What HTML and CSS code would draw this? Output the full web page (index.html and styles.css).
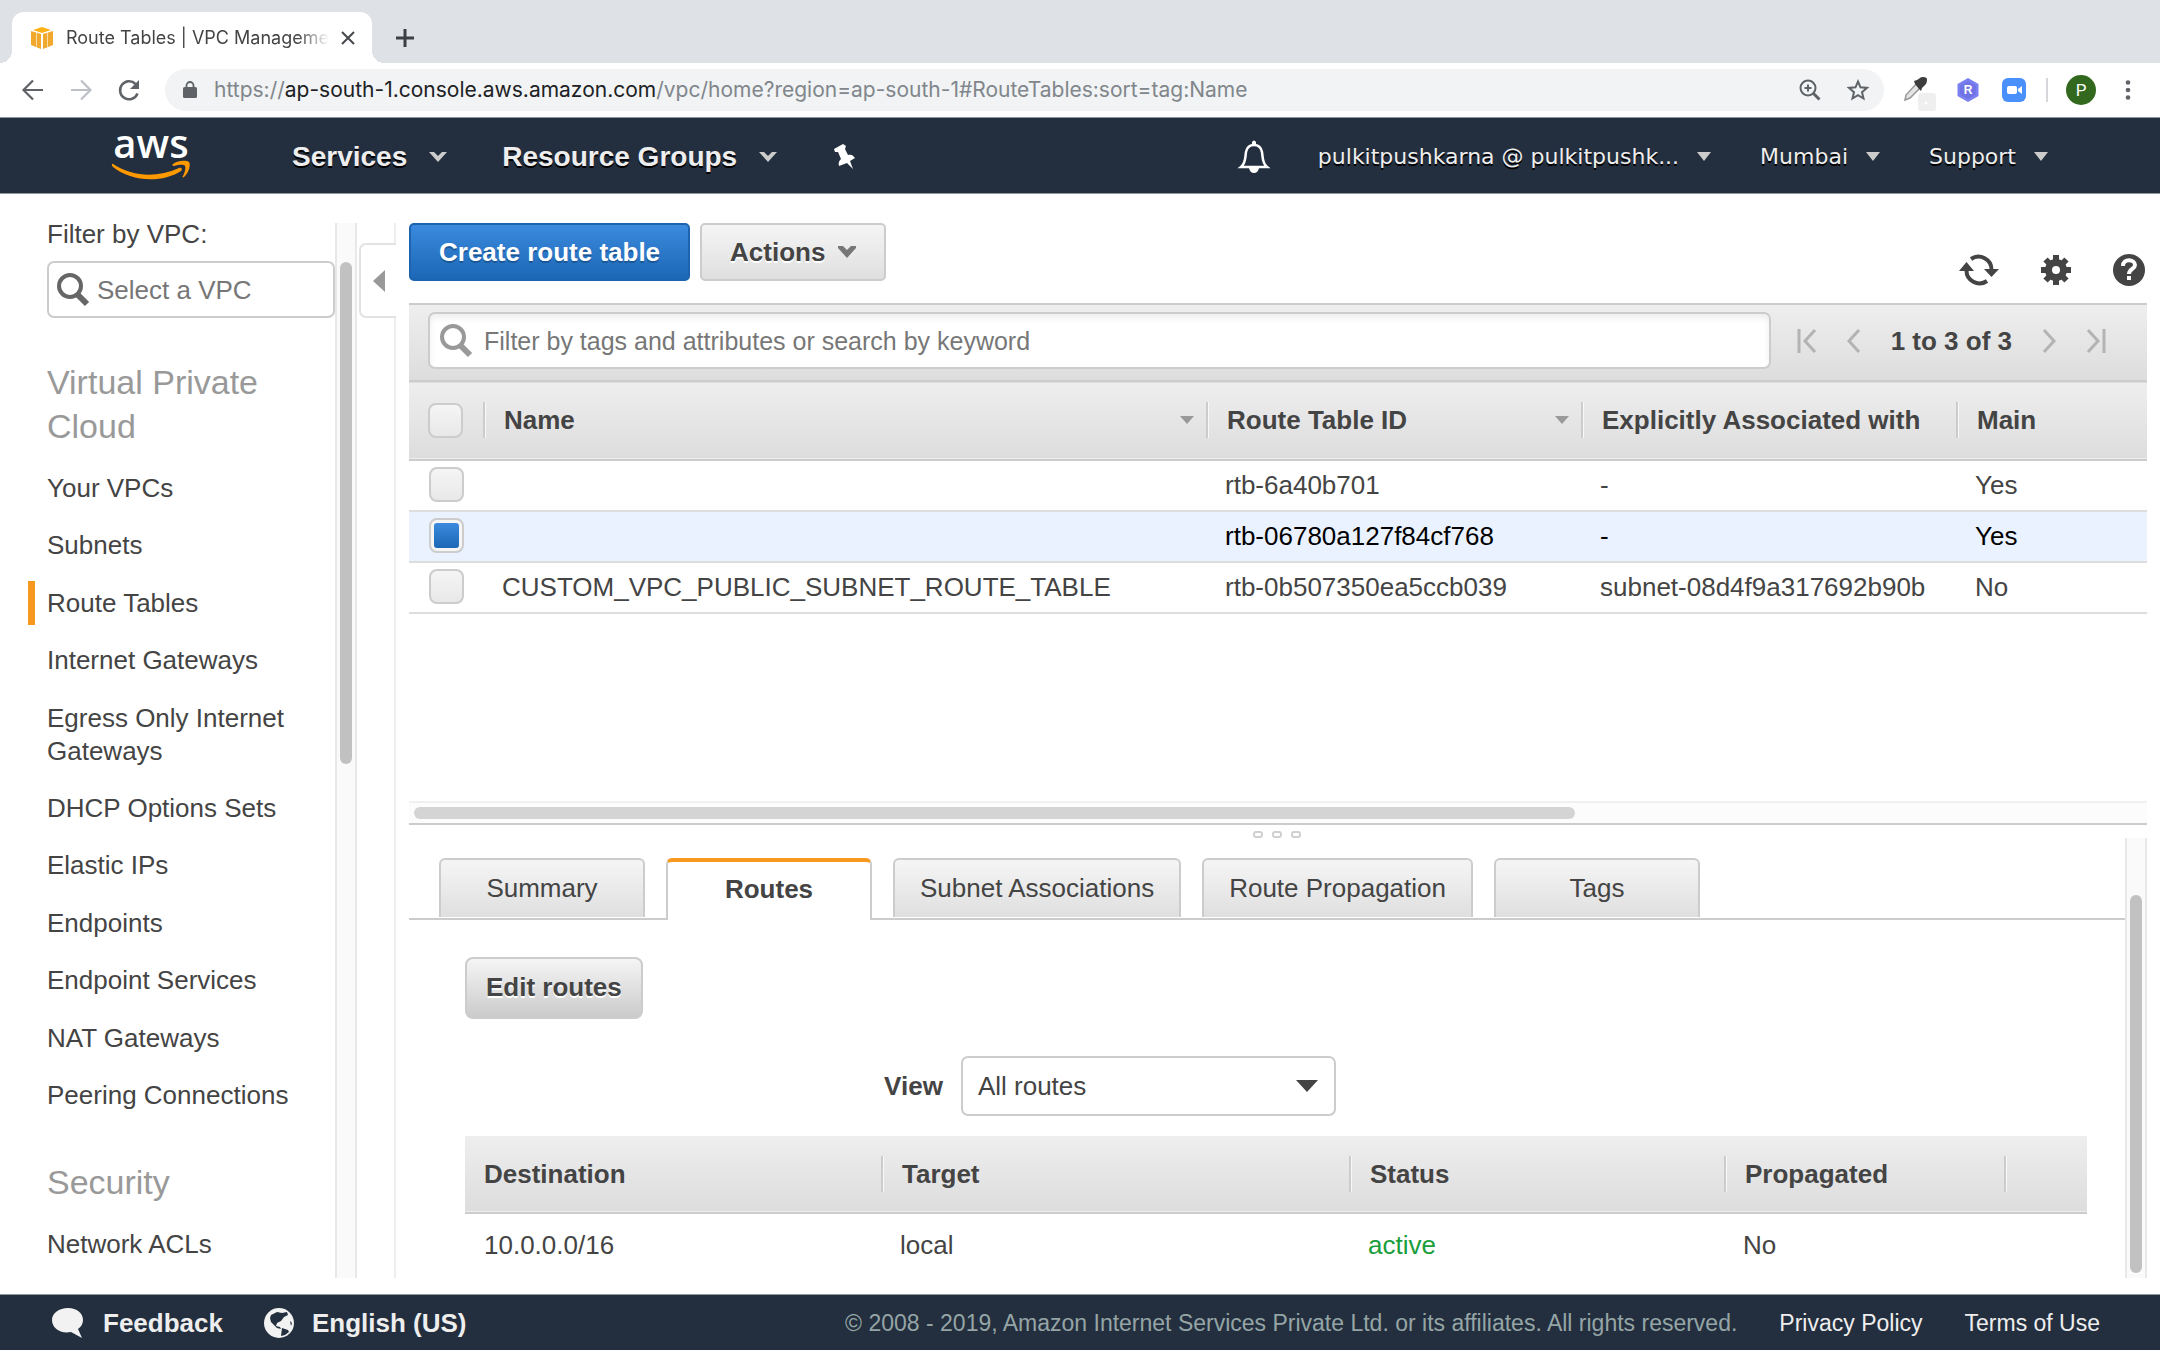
FILE: index.html
```
<!DOCTYPE html>
<html lang="en">
<head>
    <meta charset="UTF-8">
    <meta name="viewport" content="width=device-width, initial-scale=1.0">
    <title>Route Tables | VPC Management Console</title>
    <link rel="stylesheet" href="styles.css">
</head>
<body>

<!-- Browser window -->
<div class="tab-strip">
    <div class="browser-tab">
        <svg class="favicon" width="22" height="22" viewBox="0 0 22 22">
            <path fill="#f0a92c" d="M0 4l10 3v15L0 18zM22 4l-10 3v15l10-4z"/>
            <path fill="#fbb117" d="M11 0l9 3-9 3-9-3z"/>
            <path fill="#fff" opacity=".6" d="M5 5.500l1 .3v14L5 19.500zM17 5.500l-1 .3v14l1-.3z"/>
        </svg>
        <span class="tab-title">Route Tables | VPC Management</span>
        <button class="chrome-button" aria-label="Close tab">
            <svg width="14" height="14" viewBox="0 0 14 14" fill="none" stroke="#45494d" stroke-width="2"><path d="M1 1l12 12M13 1L1 13"/></svg>
        </button>
    </div>
    <button class="chrome-button new-tab" aria-label="New tab">
        <svg width="20" height="20" viewBox="0 0 20 20" fill="none" stroke="#3c4043" stroke-width="3"><path d="M10 1v18M1 10h18"/></svg>
    </button>
</div>
<div class="browser-bar">
    <button class="chrome-button nav-button" aria-label="Back">
        <svg width="24" height="24" viewBox="0 0 24 24" fill="none" stroke="#5f6368" stroke-width="2.200"><path d="M22 12H3M12 2.500L2.500 12l9.500 9.500"/></svg>
    </button>
    <button class="chrome-button nav-button" aria-label="Forward">
        <svg width="24" height="24" viewBox="0 0 24 24" fill="none" stroke="#bdc1c6" stroke-width="2.200"><path d="M2 12h19M12 2.500l9.500 9.500-9.500 9.500"/></svg>
    </button>
    <button class="chrome-button nav-button" aria-label="Reload">
        <svg width="24" height="24" viewBox="0 0 24 24" fill="none" stroke="#5f6368" stroke-width="2.500"><path d="M20.500 15.500A9 9 0 1 1 18.500 6"/><path fill="#5f6368" stroke="none" d="M22 2v9h-9z"/></svg>
    </button>
    <div class="address-bar">
        <svg width="14" height="18" viewBox="0 0 14 18"><rect x="0" y="6" width="14" height="11" rx="1.500" fill="#5f6368"/><path d="M3.500 7V4.500a3.500 3.500 0 0 1 7 0V7" fill="none" stroke="#5f6368" stroke-width="1.800"/></svg>
        <span class="url">https://<span class="host">ap-south-1.console.aws.amazon.com</span>/vpc/home?region=ap-south-1#RouteTables:sort=tag:Name</span>
        <button class="chrome-button" aria-label="Zoom">
            <svg width="28" height="28" viewBox="0 0 28 28" fill="none" stroke="#5f6368" stroke-width="2"><circle cx="12" cy="12" r="7.500"/><path d="M12 8.500v7M8.500 12h7"/><path stroke-width="3" d="M17.500 17.500l6 6"/></svg>
        </button>
        <button class="chrome-button" aria-label="Bookmark">
            <svg width="28" height="28" viewBox="0 0 28 28" fill="none" stroke="#5f6368" stroke-width="2"><path d="M14 5.500l2.500 5.800 6.500.6-5 4.300 1.500 6.300-5.500-3.300-5.500 3.300L10 16.200l-5-4.300 6.500-.6z"/></svg>
        </button>
    </div>
    <svg width="34" height="42" viewBox="0 0 34 42">
        <rect x="16" y="24" width="18" height="18" rx="3" fill="#efefef"/><circle cx="24" cy="34" r="1.500" fill="#fff"/>
        <path d="M3 31l1-5L15 14l4 4L8 29z" fill="#e4e4e4" stroke="#999" stroke-width="1.500"/>
        <path d="M12 12l3-1 3-2c2-2 7-1 7 1s0 5-3 7l-2 2-1 3-2-2-4-5z" fill="#3d3d3d"/>
    </svg>
    <svg width="28" height="28" viewBox="0 0 28 28"><path d="M14 2l10.500 6v12L14 26 3.500 20V8z" fill="#7b80f0"/><path d="M14 5l8 4.500v9L14 23l-8-4.500v-9z" fill="#7074e6"/><text class="hex-letter" x="14" y="18" text-anchor="middle">R</text></svg>
    <svg width="28" height="28" viewBox="0 0 28 28"><rect x="2" y="2" width="24" height="24" rx="6" fill="#4a90fb"/><rect x="7" y="10" width="10" height="8" rx="2" fill="#fff"/><path d="M18 13l4-3v8l-4-3z" fill="#fff"/></svg>
    <span class="bar-divider"></span>
    <span class="avatar">P</span>
    <button class="chrome-button" aria-label="Menu">
        <svg width="28" height="28" viewBox="0 0 28 28" fill="#5f6368"><circle cx="14" cy="6.500" r="2.300"/><circle cx="14" cy="14" r="2.300"/><circle cx="14" cy="21.500" r="2.300"/></svg>
    </button>
</div>

<!-- AWS navigation -->
<header class="aws-nav">
    <a class="logo" href="#" aria-label="AWS">
        <svg width="78" height="48" viewBox="0 0 78 48">
            <text class="logo-text" x="38" y="25" text-anchor="middle">aws</text>
            <path fill="#f90" d="M0 31c20 13 44 14 66 4 2-1 4 1 2 3-20 13-51 10-68-4-2-2-1-4 0-3z"/>
            <path fill="#f90" d="M60 31c5-4 14-4 16-2s0 11-5 15c-1 1-2 0-1-1 2-4 3-8 2-10s-7-1-11 0c-2 0-2-1-1-2z"/>
        </svg>
    </a>
    <button class="nav-item nav-main">Services
        <svg width="18" height="12" viewBox="0 0 18 12"><path fill="#ccc" d="M0 1h5l4 4 4-4h5l-9 10z"/></svg>
    </button>
    <button class="nav-item nav-main">Resource Groups
        <svg width="18" height="12" viewBox="0 0 18 12"><path fill="#ccc" d="M0 1h5l4 4 4-4h5l-9 10z"/></svg>
    </button>
    <button class="nav-item" aria-label="Pin shortcuts">
        <svg width="24" height="26" viewBox="0 0 24 26"><path fill="#fff" d="M2 5l9-5 3 2-1 3 3 6c3-1 5 0 7 3l-5 3 3 8-6-6-8 3c-1-3 0-5 2-7L6 8H3z"/></svg>
    </button>
    <div class="nav-right">
        <button class="nav-item" aria-label="Notifications">
            <svg width="30" height="34" viewBox="0 0 30 34"><path fill="none" stroke="#fff" stroke-width="2.500" d="M2 27c5-4 4-9 5-15 1-5 4-7 8-7s7 2 8 7c1 6 0 11 5 15z"/><path fill="#fff" d="M13 2q2-3 4 0v3h-4zM10 28h10q-1 5-5 5t-5-5z"/></svg>
        </button>
        <button class="nav-item nav-small">pulkitpushkarna @ pulkitpushk...
            <svg width="14" height="9" viewBox="0 0 14 9"><path fill="#ccc" d="M0 0h14L7 9z"/></svg>
        </button>
        <button class="nav-item nav-small">Mumbai
            <svg width="14" height="9" viewBox="0 0 14 9"><path fill="#ccc" d="M0 0h14L7 9z"/></svg>
        </button>
        <button class="nav-item nav-small">Support
            <svg width="14" height="9" viewBox="0 0 14 9"><path fill="#ccc" d="M0 0h14L7 9z"/></svg>
        </button>
    </div>
</header>

<div class="console">
    <aside class="sidebar">
        <label class="filter-label" for="vpcFilter">Filter by VPC:</label>
        <div class="search-box vpc-filter">
            <svg width="34" height="34" viewBox="0 0 34 34" fill="none" stroke="#666"><circle cx="14" cy="13" r="11" stroke-width="4"/><path d="M22 22l9 9" stroke-width="6"/></svg>
            <input type="text" id="vpcFilter" placeholder="Select a VPC">
        </div>
        <h2>Virtual Private Cloud</h2>
        <ul class="side-list side-list-main">
            <li><a href="#">Your VPCs</a></li>
            <li><a href="#">Subnets</a></li>
            <li class="current"><a href="#">Route Tables</a></li>
            <li><a href="#">Internet Gateways</a></li>
            <li><a href="#">Egress Only Internet Gateways</a></li>
            <li><a href="#">DHCP Options Sets</a></li>
            <li><a href="#">Elastic IPs</a></li>
            <li><a href="#">Endpoints</a></li>
            <li><a href="#">Endpoint Services</a></li>
            <li><a href="#">NAT Gateways</a></li>
            <li><a href="#">Peering Connections</a></li>
        </ul>
        <h2>Security</h2>
        <ul class="side-list">
            <li><a href="#">Network ACLs</a></li>
        </ul>
    </aside>
    <div class="side-scroll"><div class="side-thumb"></div></div>
    <div class="side-edge">
        <button class="collapse" aria-label="Collapse sidebar">
            <svg width="12" height="22" viewBox="0 0 12 22"><path fill="#999" d="M12 0v22L0 11z"/></svg>
        </button>
    </div>

    <main class="content">
        <div class="action-bar">
            <button class="btn btn-primary">Create route table</button>
            <button class="btn">Actions
                <svg width="18" height="12" viewBox="0 0 18 12"><path fill="#777" d="M0 0h5l4 4 4-4h5v2l-9 10L0 2z"/></svg>
            </button>
            <div class="tools">
                <button class="tool" aria-label="Refresh">
                    <svg width="40" height="34" viewBox="0 0 40 34" fill="none" stroke="#444" stroke-width="4"><path d="M12 6A13 13 0 0 1 32.500 17M28 28A13 13 0 0 1 7.500 17"/><path fill="#444" stroke="none" d="M25 16h15l-7.500 8zM0 18h15L7.500 9z"/></svg>
                </button>
                <button class="tool" aria-label="Preferences">
                    <svg width="30" height="30" viewBox="0 0 30 30"><circle cx="15" cy="15" r="7.500" fill="none" stroke="#444" stroke-width="7"/><path stroke="#444" stroke-width="6" d="M15 0v6M15 24v6M0 15h6M24 15h6M4.500 4.500l4 4M21.500 21.500l4 4M25.500 4.500l-4 4M8.500 21.500l-4 4"/></svg>
                </button>
                <button class="tool" aria-label="Help">
                    <svg width="32" height="32" viewBox="0 0 32 32"><circle cx="16" cy="16" r="16" fill="#444"/><path fill="none" stroke="#fff" stroke-width="4" d="M10 12c0-8 12-7 12-1 0 4-6 4-6 9"/><path fill="#fff" d="M14 22h4v4h-4z"/></svg>
                </button>
            </div>
        </div>

        <div class="grid-filter">
            <div class="search-box grid-search">
                <svg width="34" height="34" viewBox="0 0 34 34" fill="none" stroke="#999"><circle cx="14" cy="13" r="11" stroke-width="4"/><path d="M22 22l9 9" stroke-width="6"/></svg>
                <input type="text" placeholder="Filter by tags and attributes or search by keyword" aria-label="Filter route tables">
            </div>
            <div class="pager">
                <button aria-label="First page"><svg width="20" height="24" viewBox="0 0 20 24" fill="none" stroke="#b3b3b3" stroke-width="3"><path d="M2 0v24M18 1L8 12l10 11"/></svg></button>
                <button aria-label="Previous page"><svg width="14" height="24" viewBox="0 0 14 24" fill="none" stroke="#b3b3b3" stroke-width="3"><path d="M12 1L2 12l10 11"/></svg></button>
                <span>1 to 3 of 3</span>
                <button aria-label="Next page"><svg width="14" height="24" viewBox="0 0 14 24" fill="none" stroke="#b3b3b3" stroke-width="3"><path d="M2 1l10 11L2 23"/></svg></button>
                <button aria-label="Last page"><svg width="20" height="24" viewBox="0 0 20 24" fill="none" stroke="#b3b3b3" stroke-width="3"><path d="M18 0v24M2 1l10 11L2 23"/></svg></button>
            </div>
        </div>

        <table class="data-table route-tables">
            <colgroup>
                <col class="col-check"><col><col class="col-id"><col class="col-id"><col class="col-main">
            </colgroup>
            <thead>
                <tr>
                    <th class="check"><input type="checkbox" aria-label="Select all"></th>
                    <th><div class="th">Name <svg width="14" height="8" viewBox="0 0 14 8"><path fill="#999" d="M0 0h14L7 8z"/></svg></div></th>
                    <th><div class="th">Route Table ID <svg width="14" height="8" viewBox="0 0 14 8"><path fill="#999" d="M0 0h14L7 8z"/></svg></div></th>
                    <th><div class="th">Explicitly Associated with</div></th>
                    <th><div class="th">Main</div></th>
                </tr>
            </thead>
            <tbody>
                <tr>
                    <td class="check"><input type="checkbox" aria-label="Select rtb-6a40b701"></td>
                    <td></td>
                    <td>rtb-6a40b701</td>
                    <td>-</td>
                    <td>Yes</td>
                </tr>
                <tr class="selected">
                    <td class="check"><input type="checkbox" aria-label="Select rtb-06780a127f84cf768" checked></td>
                    <td></td>
                    <td>rtb-06780a127f84cf768</td>
                    <td>-</td>
                    <td>Yes</td>
                </tr>
                <tr>
                    <td class="check"><input type="checkbox" aria-label="Select rtb-0b507350ea5ccb039"></td>
                    <td>CUSTOM_VPC_PUBLIC_SUBNET_ROUTE_TABLE</td>
                    <td>rtb-0b507350ea5ccb039</td>
                    <td>subnet-08d4f9a317692b90b</td>
                    <td>No</td>
                </tr>
            </tbody>
        </table>

        <div class="grid-scroll"><div class="grid-thumb"></div></div>
        <div class="splitter"><i></i><i></i><i></i></div>

        <section class="details">
            <div class="details-body">
                <div class="tabs" role="tablist">
                    <button class="tab" role="tab">Summary</button>
                    <button class="tab active" role="tab" aria-selected="true">Routes</button>
                    <button class="tab" role="tab">Subnet Associations</button>
                    <button class="tab" role="tab">Route Propagation</button>
                    <button class="tab" role="tab">Tags</button>
                </div>
                <div class="panel">
                    <button class="btn btn-edit">Edit routes</button>
                    <div class="view-row">
                        <label for="view">View</label>
                        <div class="select-box">
                            <select id="view">
                                <option>All routes</option>
                                <option>Propagated</option>
                            </select>
                            <svg width="22" height="12" viewBox="0 0 22 12"><path fill="#444" d="M0 0h22L11 12z"/></svg>
                        </div>
                    </div>
                    <table class="data-table routes">
                        <colgroup>
                            <col class="col-destination"><col class="col-target"><col class="col-status"><col class="col-propagated"><col>
                        </colgroup>
                        <thead>
                            <tr>
                                <th><div class="th">Destination</div></th>
                                <th><div class="th">Target</div></th>
                                <th><div class="th">Status</div></th>
                                <th><div class="th">Propagated</div></th>
                                <th><div class="th"></div></th>
                            </tr>
                        </thead>
                        <tbody>
                            <tr>
                                <td>10.0.0.0/16</td>
                                <td>local</td>
                                <td class="status-active">active</td>
                                <td>No</td>
                                <td></td>
                            </tr>
                        </tbody>
                    </table>
                </div>
            </div>
            <div class="details-scroll"><div class="details-thumb"></div></div>
        </section>
    </main>
</div>

<footer class="aws-footer">
    <a class="footer-main" href="#">
        <svg width="34" height="32" viewBox="0 0 34 32"><path fill="#f2f2f2" d="M17 1c9 0 15 5 15 12 0 4-2 7-5 9l4 9-11-6C9 27 1 21 1 13 1 6 8 1 17 1z"/></svg>
        Feedback
    </a>
    <a class="footer-main" href="#">
        <svg width="30" height="30" viewBox="0 0 30 30"><circle cx="15" cy="15" r="15" fill="#f2f2f2"/><path fill="#232f3e" d="M7 7l6-3 5 1 5-1 1 3-4 2-3 4-4 2-1 3 4 1 1 2-4-1-6-6-1-4zM18 20l6 2 1 2-4 3-4 1zM26 13l2 2-1 3z"/></svg>
        English (US)
    </a>
    <div class="legal">
        <span>© 2008 - 2019, Amazon Internet Services Private Ltd. or its affiliates. All rights reserved.</span>
        <a href="#">Privacy Policy</a>
        <a href="#">Terms of Use</a>
    </div>
</footer>

</body>
</html>
```
FILE: styles.css
```
* {
    box-sizing: border-box;
}
body {
    margin: 0;
    height: 100vh;
    display: flex;
    flex-direction: column;
    font-family: "Liberation Sans", Arial, sans-serif;
    font-size: 26px;
    line-height: 32px;
    color: #444;
    background-color: #fff;
}
button, input, select {
    font: inherit;
    color: inherit;
}
button {
    padding: 0;
    border: none;
    background: none;
    cursor: pointer;
}
a {
    color: inherit;
    text-decoration: none;
}
svg {
    display: block;
    flex: none;
    overflow: visible;
}

/* Browser window */
.tab-strip {
    display: flex;
    align-items: flex-end;
    height: 63px;
    padding-left: 12px;
    background-color: #dee1e6;
}
.browser-tab {
    position: relative;
    display: flex;
    align-items: center;
    width: 360px;
    height: 51px;
    padding: 0 17px 0 19px;
    background-color: #fff;
    border-radius: 12px 12px 0 0;
}
/* Curved feet on both sides of the tab */
.browser-tab::before, .browser-tab::after {
    content: "";
    position: absolute;
    bottom: 0;
    width: 12px;
    height: 12px;
}
.browser-tab::before {
    left: -12px;
    background: radial-gradient(circle at 0 0, transparent 12px, #fff 12px);
}
.browser-tab::after {
    right: -12px;
    background: radial-gradient(circle at 100% 0, transparent 12px, #fff 12px);
}
.tab-title {
    flex: 1;
    margin: 0 12px 0 13px;
    font-family: Inter, sans-serif;
    font-size: 18px;
    white-space: nowrap;
    overflow: hidden;
    -webkit-mask-image: linear-gradient(to right, #000 88%, transparent);
    mask-image: linear-gradient(to right, #000 88%, transparent);
}
.new-tab {
    height: 51px;
    padding: 0 23px;
}
.browser-bar {
    display: flex;
    align-items: center;
    gap: 18px;
    height: 54px;
    padding: 0 18px 0 21px;
}
.nav-button {
    margin-right: 6px;
}
.address-bar {
    flex: 1;
    display: flex;
    align-items: center;
    gap: 17px;
    height: 42px;
    padding: 0 12px 0 18px;
    border-radius: 21px;
    background-color: #f1f3f4;
}
.address-bar .chrome-button + .chrome-button {
    margin-left: 3px;
}
.url {
    flex: 1;
    font-family: Inter, sans-serif;
    font-size: 21px;
    color: #80868b;
    white-space: nowrap;
}
.host {
    color: #202124;
}
.hex-letter {
    font-size: 12px;
    font-weight: bold;
    fill: #fff;
}
.bar-divider {
    width: 2px;
    height: 24px;
    background-color: #d5d7da;
}
.avatar {
    width: 30px;
    height: 30px;
    border-radius: 50%;
    background-color: #33691e;
    color: #fff;
    font-family: Roboto, sans-serif;
    font-size: 17px;
    line-height: 30px;
    text-align: center;
}

/* AWS navigation */
.aws-nav {
    display: flex;
    align-items: center;
    height: 77px;
    padding: 2px 112px 0 113px;
    background-color: #232f3e;
    border-top: 1px solid #8f969e;
    border-bottom: 1px solid #8f969e;
    color: #eee;
}
.logo {
    margin-right: 101px;
}
.logo-text {
    font-family: "Open Sans", sans-serif;
    font-size: 40px;
    font-weight: 600;
    fill: #fff;
}
.nav-item {
    display: flex;
    align-items: center;
    white-space: nowrap;
    text-shadow: 0 2px 0 #000;
}
.nav-main {
    gap: 22px;
    margin-right: 55px;
    font-size: 28px;
    font-weight: bold;
}
.nav-right {
    display: flex;
    align-items: center;
    gap: 49px;
    margin-left: auto;
}
.nav-small {
    gap: 18px;
    font-family: "DejaVu Sans", sans-serif;
    font-size: 22px;
}

/* Page layout */
.console {
    flex: 1;
    display: flex;
    min-height: 0;
    padding: 29px 13px 16px 0;
}
.sidebar {
    display: flex;
    flex-direction: column;
    width: 335px;
    padding-left: 47px;
}
.filter-label {
    line-height: 22px;
}
.search-box {
    display: flex;
    align-items: center;
    height: 57px;
    border: 2px solid #ccc;
    border-radius: 7px;
    background-color: #fff;
}
.search-box input {
    flex: 1;
    min-width: 0;
    padding: 0;
    border: none;
    outline: none;
    background: none;
}
.search-box input::placeholder {
    color: #777;
    opacity: 1;
}
.vpc-filter {
    gap: 7px;
    margin-top: 16px;
    padding: 0 7px;
}
.sidebar h2 {
    margin: 42px 48px 24px 0;
    font-size: 34px;
    font-weight: normal;
    line-height: 44px;
    color: #999;
}
.side-list {
    margin: 0;
    padding: 0;
    list-style-type: none;
    line-height: 33px;
}
.side-list-main {
    flex: 1;
    display: flex;
    flex-direction: column;
    justify-content: space-between;
}
.side-list li {
    padding-right: 40px;
}
.side-list + h2 {
    margin-top: 48px;
}
.side-list:last-child {
    margin-bottom: 17px;
}
.current {
    position: relative;
}
.current::before {
    content: "";
    position: absolute;
    left: -19px;
    top: -6px;
    width: 7px;
    height: 44px;
    background-color: #f7981f;
}
.side-scroll {
    width: 22px;
    padding: 39px 3px 0;
    border-left: 2px solid #e8e8e8;
    border-right: 2px solid #e8e8e8;
    background-color: #fafafa;
}
.side-thumb {
    width: 12px;
    height: 502px;
    border-radius: 6px;
    background-color: #c1c1c1;
}
.side-edge {
    width: 39px;
    padding: 20px 0 0 2px;
    border-right: 2px solid #eee;
}
.collapse {
    display: flex;
    align-items: center;
    width: 37px;
    height: 75px;
    padding-left: 12px;
    border: 2px solid #e2e2e2;
    border-right: none;
    border-radius: 7px 0 0 7px;
    background-color: #fff;
}
.content {
    flex: 1;
    display: flex;
    flex-direction: column;
    min-width: 0;
    margin-left: 13px;
}

/* Buttons */
.action-bar {
    display: flex;
    align-items: flex-start;
    gap: 10px;
    height: 80px;
}
.btn {
    display: flex;
    align-items: center;
    gap: 13px;
    height: 58px;
    padding: 0 28px;
    border: 2px solid #ccc;
    border-radius: 5px;
    background: linear-gradient(#f5f5f5, #dfdfdf);
    font-weight: bold;
    text-shadow: 0 2px 0 #fff;
}
.btn-primary {
    border-color: #1d64b0;
    background: linear-gradient(#3b8ade, #1c67b5);
    color: #fff;
    text-shadow: 0 2px 0 #1a5796;
}
.btn-edit {
    height: 62px;
    padding: 0 19px 2px;
    border-radius: 8px;
    background: linear-gradient(#f5f5f5, #cbcbcb);
}
.tools {
    display: flex;
    align-items: center;
    gap: 42px;
    margin: 30px 2px 0 auto;
}

/* Route table grid */
.grid-filter {
    display: flex;
    align-items: center;
    height: 77px;
    padding: 0 41px 4px 19px;
    border-top: 2px solid #ccc;
    background: linear-gradient(#eee, #ddd);
}
.grid-search {
    flex: 1;
    gap: 11px;
    padding: 0 9px;
    font-size: 25px;
    box-shadow: inset 0 4px 6px #eee;
}
.pager {
    display: flex;
    align-items: center;
    margin-left: 26px;
    gap: 30px;
    font-weight: bold;
}
.data-table {
    width: 100%;
    border-collapse: collapse;
    table-layout: fixed;
    text-align: left;
}
.data-table thead tr {
    background: linear-gradient(#eee, #ddd);
    border-bottom: 2px solid #ccc;
}
.data-table th {
    height: 79px;
    padding: 0 0 2px;
}
.data-table td {
    height: 51px;
    padding: 0 0 2px 19px;
    white-space: nowrap;
}
.th {
    display: flex;
    align-items: center;
    justify-content: space-between;
    height: 36px;
    padding: 0 12px 0 19px;
    border-left: 2px solid #ccc;
    box-shadow: inset 1px 0 0 #f8f8f8;
    white-space: nowrap;
}
.route-tables thead tr {
    border-top: 2px solid #ccc;
}
.route-tables tbody tr {
    border-bottom: 2px solid #ddd;
}
.route-tables .selected {
    background-color: #eaf2ff;
    color: #000;
}
.data-table .check {
    padding: 0 0 0 19px;
}
.data-table td.check {
    padding: 0 0 2px 20px;
}
.check input {
    appearance: none;
    display: block;
    width: 35px;
    height: 35px;
    margin: 0;
    border: 2px solid #ccc;
    border-radius: 8px;
    background: linear-gradient(#f5f5f5, #e8e8e8);
}
.check input:checked {
    padding: 3px;
    background: linear-gradient(#3b8ade, #1c67b5) content-box, #f5f5f5;
}
.col-check {
    width: 74px;
}
.col-id {
    width: 375px;
}
.col-main {
    width: 191px;
}
.grid-scroll {
    height: 24px;
    margin-top: auto;
    padding: 4px 5px;
    border-top: 2px solid #f0f0f0;
    border-bottom: 2px solid #ccc;
    background-color: #fcfcfc;
}
.grid-thumb {
    width: 67.2%;
    height: 12px;
    border-radius: 6px;
    background-color: #d4d4d4;
}
.splitter {
    display: flex;
    justify-content: center;
    gap: 9px;
    height: 13px;
    padding: 6px 3px 0 0;
}
.splitter i {
    width: 10px;
    height: 7px;
    border: 2px solid #d0d0d0;
    border-radius: 3px;
}

/* Details pane */
.details {
    display: flex;
}
.details-body {
    flex: 1;
    min-width: 0;
}
.tabs {
    display: flex;
    gap: 21px;
    height: 82px;
    padding: 20px 30px 0;
    border-bottom: 2px solid #ccc;
}
.tab {
    height: 59px;
    min-width: 206px;
    padding: 0 25px 2px;
    border: 2px solid #ccc;
    border-bottom: none;
    border-radius: 6px 6px 0 0;
    background: linear-gradient(#f5f5f5, #dfdfdf);
}
.tab.active {
    height: 62px;
    padding-bottom: 4px;
    border-top: 4px solid #f7981f;
    background: #fff;
    font-weight: bold;
}
.panel {
    padding: 37px 38px 0 56px;
}
.view-row {
    display: flex;
    align-items: center;
    justify-content: center;
    gap: 18px;
    height: 60px;
    margin: 37px 0 20px;
    padding-right: 332px;
    font-weight: bold;
}
.select-box {
    position: relative;
    width: 375px;
    font-weight: normal;
}
.select-box select {
    appearance: none;
    width: 100%;
    height: 60px;
    padding: 0 15px;
    border: 2px solid #ccc;
    border-radius: 7px;
    background-color: #fff;
}
.select-box svg {
    position: absolute;
    right: 18px;
    top: 24px;
    pointer-events: none;
}
.routes th {
    height: 77px;
    padding: 0;
}
.routes td {
    height: 65px;
}
.routes th:first-child .th {
    border-color: transparent;
    box-shadow: none;
    padding-left: 17px;
}
.col-destination {
    width: 416px;
}
.col-target {
    width: 468px;
}
.col-status {
    width: 375px;
}
.col-propagated {
    width: 280px;
}
.status-active {
    color: #1a9e3c;
}
.details-scroll {
    width: 22px;
    padding: 57px 3px 0;
    border-left: 2px solid #e8e8e8;
    border-right: 2px solid #e8e8e8;
    background-color: #fafafa;
}
.details-thumb {
    width: 12px;
    height: 378px;
    border-radius: 6px;
    background-color: #c1c1c1;
}

/* Footer */
.aws-footer {
    display: flex;
    align-items: center;
    gap: 41px;
    height: 56px;
    padding: 0 60px 0 51px;
    background-color: #232f3e;
    border-top: 1px solid #8f969e;
    color: #eee;
}
.footer-main {
    display: flex;
    align-items: center;
    gap: 18px;
    font-weight: bold;
}
.legal {
    display: flex;
    gap: 42px;
    margin-left: auto;
    font-size: 23px;
    white-space: nowrap;
}
.legal span {
    color: #95a5a6;
}
```
